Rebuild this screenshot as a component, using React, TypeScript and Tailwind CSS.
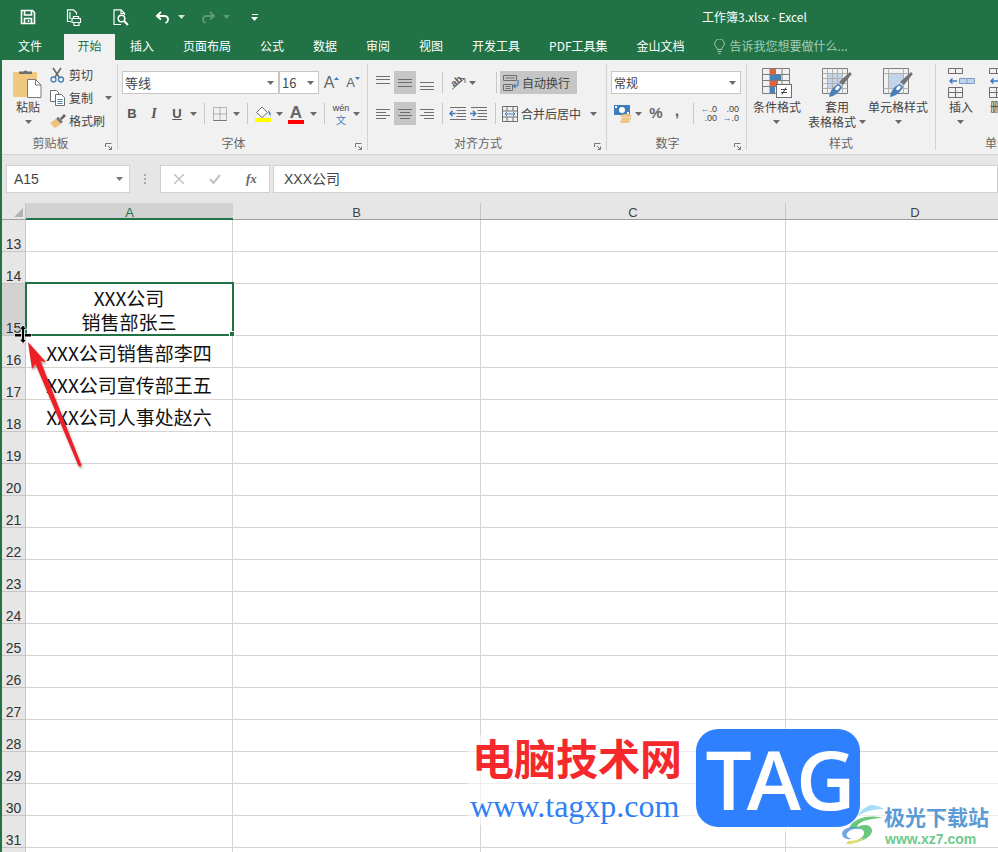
import type { ReactNode } from "react";

const tabs = ["插入", "页面布局", "公式", "数据", "审阅", "视图", "开发工具", "PDF工具集", "金山文档"];

const rows = [
  { n: 13, h: "h-[32px]" },
  { n: 14, h: "h-[32px]" },
  { n: 15, h: "h-[52px]", selected: true },
  { n: 16, h: "h-[32px]", text: "XXX公司销售部李四" },
  { n: 17, h: "h-[32px]", text: "XXX公司宣传部王五" },
  { n: 18, h: "h-[32px]", text: "XXX公司人事处赵六" },
  ...[19, 20, 21, 22, 23, 24, 25, 26, 27, 28, 29, 30, 31, 32].map((n) => ({ n, h: "h-[32px]" })),
] as { n: number; h: string; text?: string; selected?: boolean }[];

function Caret({ color = "#6a6a6a" }: { color?: string }) {
  return (
    <svg width="7" height="4" viewBox="0 0 7 4">
      <path d="M0 0h7L3.5 4z" fill={color} />
    </svg>
  );
}

function Launcher() {
  return (
    <svg width="7" height="7" viewBox="0 0 7 7" fill="none" stroke="#777">
      <path d="M.5 4V.5H6.5M3 3l3 3M6.5 3.5v3h-3" />
    </svg>
  );
}

function Sep() {
  return <div className="h-[21px] w-px shrink-0 self-center bg-[#c6c6c6]" />;
}

function Slot({ className = "", children }: { className?: string; children?: ReactNode }) {
  return <div className={`flex h-[23px] shrink-0 items-center justify-center ${className}`}>{children}</div>;
}

function Group({ className, label, launcher, children }: { className: string; label: string; launcher?: boolean; children: ReactNode }) {
  return (
    <div className={`flex h-[86px] shrink-0 flex-col border-r border-[#d2d2d2] ${className}`}>
      <div className="h-[72px]">{children}</div>
      <div className="flex h-[14px] text-[#666]">
        <span className="flex-1 text-center leading-[14px]">{label}</span>
        {launcher && (
          <span className="flex w-[18px] items-end justify-end pr-[5px]">
            <Launcher />
          </span>
        )}
      </div>
    </div>
  );
}

// alignment buttons: one svg, a line per entry of [x, width, y]
function Lines({ lines, w = 14, h = 14 }: { lines: number[][]; w?: number; h?: number }) {
  return (
    <svg width={w} height={h} viewBox={`0 0 ${w} ${h}`} stroke="#6e6e6e">
      {lines.map(([x, len, y], i) => (
        <path key={i} d={`M${x} ${y + 0.5}h${len}`} />
      ))}
    </svg>
  );
}

function SaveIcon() {
  return (
    <svg width="16" height="16" viewBox="0 0 16 16" fill="none" stroke="#fff" strokeWidth="1.6">
      <path d="M1.5 1.5h11l2 2v11h-13z" />
      <path d="M4.5 2v4h7V2M4.5 14.500v-5h7v5" />
      <path d="M8.500 11v2" />
    </svg>
  );
}

function PrintIcon() {
  return (
    <svg width="17" height="17" viewBox="0 0 17 17" fill="none" stroke="#fff" strokeWidth="1.2">
      <path d="M5 12.500H1.500V.8h6l3 3v2" />
      <path d="M4 3v7" />
      <path d="M7.500 7.500h5v2h-5zM6 9.500h8.500v4H6zM8 13.500h5v3H8z" fill="#217346" />
    </svg>
  );
}

function PreviewIcon() {
  return (
    <svg width="17" height="17" viewBox="0 0 17 17" fill="none" stroke="#fff" strokeWidth="1.2">
      <path d="M8 15.500H1V.8h7l3.500 3.500V6" />
      <path d="M8 1v3.500h3.500" />
      <circle cx="8.500" cy="9.500" r="3.300" strokeWidth="1.500" />
      <path d="M11 12l4 4" strokeWidth="2" />
    </svg>
  );
}

function UndoIcon({ color = "#fff" }: { color?: string }) {
  return (
    <svg width="15" height="13" viewBox="0 0 15 13" fill="none" stroke={color} strokeWidth="1.800">
      <path d="M6 1L1.800 5 6 8.500" />
      <path d="M2 5h7.500c4 0 5 5 1 7" />
    </svg>
  );
}

function PasteIcon() {
  return (
    <svg width="30" height="30" viewBox="0 0 30 30">
      <rect x="0" y="4" width="24" height="25" rx="1" fill="#f0c87f" />
      <path d="M6 6V3.500h4.500a2.500 2.500 0 0 1 4 0H19V6z" fill="#6e6e6e" />
      <path d="M14.500 11.500h8l5.500 5.500v12.500H14.500z" fill="#fff" stroke="#7a7a7a" />
      <path d="M22.500 11.500v5.500H28" fill="none" stroke="#7a7a7a" />
    </svg>
  );
}

function ScissorsIcon() {
  return (
    <svg width="15" height="16" viewBox="0 0 15 16" fill="none">
      <path d="M3 1l6 9M11 1L5 10" stroke="#6a6a6a" strokeWidth="1.600" />
      <circle cx="3.500" cy="12.500" r="2.500" stroke="#3f7dbd" strokeWidth="1.300" />
      <circle cx="11" cy="12.500" r="2.500" stroke="#3f7dbd" strokeWidth="1.300" />
    </svg>
  );
}

function CopyIcon() {
  return (
    <svg width="16" height="16" viewBox="0 0 16 16" fill="#fff" stroke="#6e6e6e">
      <path d="M.5.500h6l2 2v9H.5z" />
      <path d="M5.500 4.500h6l3 3v8h-9z" />
      <path d="M7.500 9.500h5M7.500 11.500h5M7.500 13.500h5" stroke="#4a7fb8" />
    </svg>
  );
}

function BrushIcon() {
  return (
    <svg width="16" height="14" viewBox="0 0 16 14">
      <path d="M10 4.500L14 0l2 2-4.500 4z" fill="#5f5f5f" />
      <path d="M8 2.800l5 5-2.500 2L6 5z" fill="#777" />
      <path d="M5.500 4.500l5 5.200C9 12 6 13 4.500 14 3 12 1 10 0 8.800 2 8 4 6.500 5.500 4.500z" fill="#eec27a" />
    </svg>
  );
}

function BorderIcon() {
  return (
    <svg width="14" height="14" viewBox="0 0 14 14" fill="none" stroke="#777" strokeDasharray="1 1">
      <path d="M.5.500h13v13H.5zM7 .500v13M.5 7h13" />
      <path d="M.5 13.500h13" strokeDasharray="none" />
    </svg>
  );
}

function FillIcon() {
  return (
    <svg width="17" height="16" viewBox="0 0 17 16">
      <path d="M7 1L1.500 6.500 7 11.500l5.500-5z" fill="#fff" stroke="#6e6e6e" />
      <path d="M13 4.500c2.500 1 3 3 2.500 5.500l-1.500-2z" fill="#3f7dbd" />
      <rect y="12" width="16" height="4" fill="#ffff00" />
    </svg>
  );
}

function FontColorIcon() {
  return (
    <span className="relative flex h-[20px] w-[16px] flex-col items-center">
      <span className="text-[17px] font-bold leading-[17px] text-[#666] [font-family:'Liberation_Sans',sans-serif]">A</span>
      <span className="absolute bottom-0 h-[4px] w-[16px] bg-[#ff0000]" />
    </span>
  );
}

function CurrencyIcon() {
  return (
    <svg width="18" height="18" viewBox="0 0 18 18">
      <rect x="0" y="0" width="16" height="10" fill="#3f7dbd" />
      <circle cx="8" cy="5" r="3" fill="#fff" />
      <path d="M1 1h2v2H1zM13 7h2v2h-2z" fill="#fff" />
      <ellipse cx="12" cy="11" rx="5.500" ry="2" fill="#efc583" />
      <ellipse cx="12" cy="14" rx="5.500" ry="2" fill="#efc583" stroke="#f8f8f8" strokeWidth=".5" />
      <ellipse cx="11" cy="16.500" rx="5" ry="1.500" fill="#efc583" />
    </svg>
  );
}

function WrapIcon() {
  return (
    <svg width="16" height="16" viewBox="0 0 16 16" fill="none">
      <path d="M.5.500h13v5H.5zM.5 9.500h9v6h-9z" stroke="#6e6e6e" />
      <path d="M2.500 3h9M2.500 11.500h5M2.500 13.500h5" stroke="#6e6e6e" />
      <path d="M15 5v4c0 1.500-1 2-2 2h-2M12.500 9l-2 2 2 2" stroke="#3f7dbd" strokeWidth="1.200" />
    </svg>
  );
}

function MergeIcon() {
  return (
    <svg width="16" height="16" viewBox="0 0 16 16" fill="none">
      <path d="M.5.500h15v15H.5zM.5 5h15M.5 11h15M5 .500V5M11 .500V5M5 11v4.500M11 11v4.500" stroke="#6e6e6e" />
      <path d="M3 8h10M5 6l-2 2 2 2M11 6l2 2-2 2" stroke="#3f7dbd" />
    </svg>
  );
}

function IndentIcon({ inc }: { inc?: boolean }) {
  return (
    <svg width="17" height="13" viewBox="0 0 17 13" fill="none">
      <path d="M1 .500h16M7.500 3.500H17M7.500 6.500H17M7.500 9.500H17M1 12.500h16" stroke="#6e6e6e" />
      {inc ? (
        <path d="M0 6.500h5M3 3.800l2.500 2.700L3 9.200" stroke="#3f7dbd" strokeWidth="1.600" />
      ) : (
        <path d="M1 6.500h5.500M3.500 3.800L1 6.500l2.500 2.700" stroke="#3f7dbd" strokeWidth="1.600" />
      )}
    </svg>
  );
}

function OrientIcon() {
  return (
    <svg width="16" height="15" viewBox="0 0 16 15" fill="none">
      <text x="1" y="10" fontSize="10" fontWeight="bold" fill="#555" transform="rotate(-40 6 7)" fontFamily="Liberation Sans">ab</text>
      <path d="M2 14.500L14 4M10.500 3.500H15V8" stroke="#6e6e6e" />
    </svg>
  );
}

function CondIcon() {
  return (
    <svg width="30" height="30" viewBox="0 0 30 30" fill="none">
      <path d="M.5.500h27v25H.5zM.5 6.500h27M.5 12.500h27M.5 18.500h27M8 .500v25M20 .500v25" stroke="#7c7c7c" />
      <rect x="8" y="1" width="6" height="5" fill="#dd6440" />
      <rect x="8" y="7" width="11" height="5" fill="#4a7fb8" />
      <rect x="8" y="13" width="8" height="5" fill="#dd6440" />
      <rect x="8" y="19" width="5" height="6" fill="#4a7fb8" />
      <rect x="14.500" y="16.500" width="15" height="13" fill="#fff" stroke="#6e6e6e" />
      <path d="M19 21.500h6M19 24.500h6M24 19.500l-4 7" stroke="#444" />
    </svg>
  );
}

function TableStyleIcon({ cell }: { cell?: boolean }) {
  return (
    <svg width="30" height="30" viewBox="0 0 30 30" fill="none">
      <path d="M.5.500h25v25H.5z" stroke="#7c7c7c" />
      {cell ? (
        <>
          <path d="M.5 5.500h25M.5 20.500h25M5.500.500v25M20.500.500v25" stroke="#b0b0b0" />
          <rect x="6" y="6" width="14" height="14" fill="#c3d4ea" />
        </>
      ) : (
        <>
          <rect x="6" y="6" width="14" height="14" fill="#c3d4ea" />
          <path d="M.5 5.500h25M.5 10.500h25M.5 15.500h25M.5 20.500h25M5.500.500v25M10.500.500v25M15.500.500v25M20.500.500v25" stroke="#b0b0b0" />
        </>
      )}
      <path d="M17 14L28 4l1.800 2L21 17z" fill="#737373" />
      <path d="M7 29c1-6 4-11 10-13l3 3c-2 5-7 9-13 10z" fill="#4a7fb8" />
      <ellipse cx="15.500" cy="20" rx="2.600" ry="1.500" fill="#fff" transform="rotate(-40 15.500 20)" />
    </svg>
  );
}

function InsertIcon() {
  return (
    <svg width="27" height="30" viewBox="0 0 27 30" fill="none" stroke="#6e6e6e">
      <path d="M.5.500h14v5H.5zM7.500.500v5" />
      <path d="M.5 19.500h14v10H.5zM7.500 19.500v10M.5 24.500h14" />
      <path d="M11.500 10.500h15v5h-15zM19 10.500v5" fill="#c3d4ea" stroke="#7d9cc4" />
      <path d="M9 13H2M4.500 10.500L2 13l2.500 2.500" stroke="#3f7dbd" strokeWidth="1.500" />
    </svg>
  );
}

function LargeButton({ className, icon, children }: { className: string; icon: ReactNode; children: ReactNode }) {
  return (
    <div className={`flex shrink-0 flex-col items-center pt-[4px] ${className}`}>
      <div className="flex h-[30px] items-center">{icon}</div>
      <div className="mt-[1px] flex flex-col items-center leading-[15px]">{children}</div>
    </div>
  );
}

function Select({ className, text, size = "text-[12px]" }: { className: string; text: string; size?: string }) {
  return (
    <div className={`flex h-[23px] shrink-0 items-center justify-between border border-[#c6c6c6] bg-white pl-[2px] pr-[4px] ${size} ${className}`}>
      <span>{text}</span>
      <Caret />
    </div>
  );
}

function SwirlLogo() {
  return (
    <svg width="44" height="42" viewBox="0 0 44 42" fill="none">
      <path d="M30 1C24 3 19 7 17 12c6-4 14-7 26-7-5-3-9-4-13-4z" fill="#a9dcf5" />
      <path d="M8 24c4-10 20-14 34-10-8 0-24 2-26 9 6-3 14-3 15 3 1 7-12 13-26 14 10-3 19-6 18-12-1-5-9-3-15-4z" fill="#6cc77e" />
      <path d="M2 27c-3 5 2 9 9 8-5-1-7-4-4-7 4-4 11-4 14-2-4-4-15-4-19 1z" fill="#4d8fd8" opacity=".8" />
      <path d="M5 40c6 0 14-2 19-6-5 1-11 3-17 3z" fill="#e6dc6c" />
    </svg>
  );
}

export default function App() {
  return (
    <div className="relative h-[852px] w-[998px] overflow-hidden border-l-2 border-[#217346] bg-white text-[12px] text-[#444] [font-family:'Noto_Sans_CJK_SC','Liberation_Sans',sans-serif]">
      {/* title bar */}
      <div className="-ml-[2px] flex h-[34px] items-center bg-[#217346] text-white">
        <div className="ml-[20px] w-[16px]"><SaveIcon /></div>
        <div className="ml-[30px] w-[17px]"><PrintIcon /></div>
        <div className="ml-[30px] w-[17px]"><PreviewIcon /></div>
        <div className="ml-[25px] w-[15px]"><UndoIcon /></div>
        <div className="ml-[8px]"><Caret color="#d5e5dc" /></div>
        <div className="ml-[16px] -scale-x-100"><UndoIcon color="#5c9a7b" /></div>
        <div className="ml-[7px]"><Caret color="#5c9a7b" /></div>
        <div className="ml-[21px] flex flex-col items-center gap-[2px]">
          <div className="h-px w-[6px] bg-white" />
          <Caret color="#fff" />
        </div>
        <div className="ml-[444px] leading-[16px]">工作簿3.xlsx - Excel</div>
      </div>

      {/* tabs */}
      <div className="-ml-[2px] flex h-[26px] items-center bg-[#217346] text-white">
        <div className="ml-[18px] w-[46px] pb-[2px]">文件</div>
        <div className="flex h-[26px] w-[51px] items-center justify-center bg-[#f1f1f1] pb-[2px] text-[#217346]">开始</div>
        <div className="ml-[2px] flex items-center gap-[3px] pb-[2px]">
          {tabs.map((t) => (
            <div key={t} className="px-[13px]">{t}</div>
          ))}
        </div>
        <div className="ml-[16px] flex items-center gap-[5px] pb-[2px] text-[#a5ccb6]">
          <svg width="11" height="15" viewBox="0 0 11 15" fill="none" stroke="#a5ccb6">
            <path d="M3.500 10.500C3 8 .7 7.500.7 4.700a4.800 4.800 0 0 1 9.600 0c0 2.800-2.300 3.300-2.800 5.800zM3.500 12.500h4M4.500 14.500h2" />
          </svg>
          告诉我您想要做什么...
        </div>
      </div>

      {/* ribbon */}
      <div className="flex h-[95px] items-start overflow-hidden border-b border-[#d4d4d4] bg-[#f1f1f1] pt-[4px]">
        <Group className="w-[116px]" label="剪贴板" launcher>
          <div className="flex">
            <div className="ml-[9px] flex w-[34px] flex-col items-center pt-[4px]">
              <PasteIcon />
              <div className="mt-[1px] leading-[15px]">粘贴</div>
              <div className="mt-[6px]"><Caret /></div>
            </div>
            <div className="ml-[5px] -mt-px flex flex-col">
              <div className="flex h-[23px] items-center gap-[3px]"><div className="w-[16px]"><ScissorsIcon /></div>剪切</div>
              <div className="flex h-[23px] items-center gap-[3px]"><div className="w-[16px]"><CopyIcon /></div>复制<div className="ml-[9px]"><Caret /></div></div>
              <div className="flex h-[23px] items-center gap-[3px]"><div className="w-[16px]"><BrushIcon /></div>格式刷</div>
            </div>
          </div>
        </Group>

        <Group className="w-[250px]" label="字体" launcher>
          <div className="flex flex-col gap-[8px] pl-[4px] pt-[7px]">
            <div className="flex">
              <Select className="w-[157px]" text="等线" size="text-[13px]" />
              <Select className="w-[40px]" text="16" size="text-[13px]" />
              <Slot className="ml-[3px] w-[19px]">
                <span className="text-[16px] leading-none text-[#666] [font-family:'Liberation_Sans',sans-serif]">A</span>
                <svg width="5" height="3" viewBox="0 0 5 3" className="mb-[9px]"><path d="M0 3h5L2.500 0z" fill="#3f7dbd" /></svg>
              </Slot>
              <Slot className="ml-[2px] w-[20px]">
                <span className="text-[13px] leading-none text-[#666] [font-family:'Liberation_Sans',sans-serif]">A</span>
                <svg width="5" height="3" viewBox="0 0 5 3" className="mb-[9px]"><path d="M0 0h5L2.500 3z" fill="#3f7dbd" /></svg>
              </Slot>
            </div>
            <div className="flex">
              <Slot className="w-[20px] text-[13px] font-bold text-[#555] [font-family:'Liberation_Sans',sans-serif]">B</Slot>
              <Slot className="w-[24px] font-['Liberation_Serif'] text-[14px] font-bold italic text-[#555]">I</Slot>
              <Slot className="w-[22px] text-[13px] font-bold text-[#555] underline [font-family:'Liberation_Sans',sans-serif]">U</Slot>
              <Slot className="w-[10px]"><Caret /></Slot>
              <div className="ml-[6px] flex"><Sep /></div>
              <Slot className="ml-[6px] w-[18px]"><BorderIcon /></Slot>
              <Slot className="ml-[2px] w-[10px]"><Caret /></Slot>
              <div className="ml-[6px] flex"><Sep /></div>
              <Slot className="ml-[6px] w-[18px]"><FillIcon /></Slot>
              <Slot className="ml-[2px] w-[10px]"><Caret /></Slot>
              <Slot className="ml-[3px] w-[18px]"><FontColorIcon /></Slot>
              <Slot className="ml-[3px] w-[10px]"><Caret /></Slot>
              <div className="ml-[6px] flex"><Sep /></div>
              <Slot className="ml-[7px] w-[18px] flex-col text-[9px] leading-[11px]">
                <span className="[font-family:'Liberation_Sans',sans-serif]">wén</span>
                <span className="text-[10px] text-[#3f7dbd]">文</span>
              </Slot>
              <Slot className="ml-[1px] w-[10px]"><Caret /></Slot>
            </div>
          </div>
        </Group>

        <Group className="w-[239px]" label="对齐方式" launcher>
          <div className="flex flex-col gap-[8px] pl-[4px] pt-[7px]">
            <div className="flex">
              <Slot className="w-[22px]"><Lines lines={[[0, 14, 0], [0, 14, 3], [0, 14, 7]]} /></Slot>
              <Slot className="w-[22px] bg-[#c6c6c6]"><Lines lines={[[0, 14, 3], [0, 14, 6], [0, 14, 10]]} /></Slot>
              <Slot className="w-[22px]"><div className="mt-[6px]"><Lines lines={[[0, 14, 3], [0, 14, 7], [0, 14, 10]]} /></div></Slot>
              <div className="ml-[4px] flex"><Sep /></div>
              <Slot className="ml-[7px] w-[16px]"><OrientIcon /></Slot>
              <Slot className="ml-[1px] w-[10px]"><Caret /></Slot>
              <div className="ml-[19px] flex"><Sep /></div>
              <div className="ml-[3px] flex h-[23px] w-[77px] items-center bg-[#c6c6c6] pl-[3px]">
                <WrapIcon />
                <span className="ml-[3px]">自动换行</span>
              </div>
            </div>
            <div className="flex">
              <Slot className="w-[22px]"><Lines lines={[[0, 14, 2], [0, 10, 5], [0, 14, 8], [0, 10, 11]]} /></Slot>
              <Slot className="w-[22px] bg-[#c6c6c6]"><Lines lines={[[0, 14, 2], [2, 10, 5], [0, 14, 8], [2, 10, 11]]} /></Slot>
              <Slot className="w-[22px]"><Lines lines={[[0, 14, 2], [4, 10, 5], [0, 14, 8], [4, 10, 11]]} /></Slot>
              <div className="ml-[4px] flex"><Sep /></div>
              <Slot className="ml-[6px] w-[17px]"><IndentIcon /></Slot>
              <Slot className="ml-[4px] w-[17px]"><IndentIcon inc /></Slot>
              <div className="ml-[8px] flex"><Sep /></div>
              <Slot className="ml-[6px] w-[16px]"><MergeIcon /></Slot>
              <span className="ml-[3px] flex w-[60px] items-center">合并后居中</span>
              <Slot className="ml-[7px] w-[10px]"><Caret /></Slot>
            </div>
          </div>
        </Group>

        <Group className="w-[140px]" label="数字" launcher>
          <div className="flex flex-col gap-[8px] pl-[4px] pt-[7px]">
            <Select className="w-[130px]" text="常规" />
            <div className="flex">
              <Slot className="ml-[3px] w-[18px]"><CurrencyIcon /></Slot>
              <Slot className="ml-[1px] w-[10px]"><Caret /></Slot>
              <Slot className="ml-[5px] w-[16px] text-[15px] font-bold text-[#666] [font-family:'Liberation_Sans',sans-serif]">%</Slot>
              <Slot className="ml-[5px] w-[16px] pb-[6px] text-[16px] font-bold text-[#666] [font-family:'Liberation_Sans',sans-serif]">,</Slot>
              <div className="ml-[8px] flex"><Sep /></div>
              <Slot className="ml-[9px] w-[14px] flex-col items-end text-[9px] leading-[9px] [font-family:'Liberation_Sans',sans-serif]">
                <span><span className="text-[#3f7dbd]">←</span>.0</span>
                <span>.00</span>
              </Slot>
              <Slot className="ml-[8px] w-[14px] flex-col items-end text-[9px] leading-[9px] [font-family:'Liberation_Sans',sans-serif]">
                <span>.00</span>
                <span><span className="text-[#3f7dbd]">→</span>.0</span>
              </Slot>
            </div>
          </div>
        </Group>

        <Group className="w-[189px]" label="样式">
          <div className="flex">
            <LargeButton className="w-[60px]" icon={<CondIcon />}>
              <span>条件格式</span>
              <span className="flex h-[15px] items-center"><Caret /></span>
            </LargeButton>
            <LargeButton className="w-[60px]" icon={<TableStyleIcon />}>
              <span>套用</span>
              <span className="flex items-center">表格格式<span className="ml-[3px]"><Caret /></span></span>
            </LargeButton>
            <LargeButton className="ml-px w-[60px]" icon={<TableStyleIcon cell />}>
              <span>单元格样式</span>
              <span className="flex h-[15px] items-center"><Caret /></span>
            </LargeButton>
          </div>
        </Group>

        <Group className="w-[134px] border-r-0" label="单元格">
          <div className="flex">
            <LargeButton className="w-[50px]" icon={<InsertIcon />}>
              <span>插入</span>
              <span className="flex h-[15px] items-center"><Caret /></span>
            </LargeButton>
            <LargeButton className="w-[32px]" icon={<InsertIcon />}>
              <span>删除</span>
              <span className="flex h-[15px] items-center"><Caret /></span>
            </LargeButton>
          </div>
        </Group>
      </div>

      {/* formula bar */}
      <div className="flex h-[48px] items-start bg-[#e6e6e6] pl-[4px] pt-[10px]">
        <div className="flex h-[28px] w-[124px] items-center justify-between border border-[#d0d0d0] bg-white pl-[7px] pr-[6px] text-[14px] [font-family:'Liberation_Sans',sans-serif]">
          A15
          <Caret color="#777" />
        </div>
        <div className="ml-[13px] flex h-[28px] w-[3px] flex-col items-center justify-center gap-[2px]">
          <span className="size-[2px] bg-[#aaa]" />
          <span className="size-[2px] bg-[#aaa]" />
          <span className="size-[2px] bg-[#aaa]" />
        </div>
        <div className="ml-[14px] flex h-[28px] w-[110px] items-center border border-[#d0d0d0] bg-white">
          <svg width="10" height="10" viewBox="0 0 10 10" className="ml-[13px]" stroke="#c2c2c2" strokeWidth="1.500"><path d="M0 0l10 10M10 0L0 10" /></svg>
          <svg width="12" height="10" viewBox="0 0 12 10" className="ml-[25px]" fill="none" stroke="#c2c2c2" strokeWidth="2"><path d="M1 5l3.500 4L11 1" /></svg>
          <span className="ml-[25px] font-['Liberation_Serif'] text-[13px] font-bold italic text-[#666]">fx</span>
        </div>
        <div className="ml-[3px] flex h-[28px] flex-1 items-center border border-[#d0d0d0] bg-white pl-[10px] text-[14px] [font-family:'Liberation_Sans','Noto_Sans_CJK_SC',sans-serif]">
          XXX公司
        </div>
      </div>

      {/* column headers */}
      <div className="flex h-[17px] border-b border-[#9f9f9f] bg-[#e6e6e6] text-[13px] leading-[16px] [font-family:'Liberation_Sans',sans-serif]">
        <div className="flex w-[24px] shrink-0 items-end justify-end border-r border-[#c6c6c6] pb-[2px] pr-[2px]">
          <svg width="9" height="9" viewBox="0 0 9 9"><path d="M9 0v9H0z" fill="#b4b4b4" /></svg>
        </div>
        <div className="-mb-px w-[207px] shrink-0 border-b-2 border-[#217346] bg-[#d2d2d2] pt-[2px] text-center text-[#217346]">A</div>
        <div className="w-[248px] shrink-0 border-r border-[#c6c6c6] pt-[2px] text-center">B</div>
        <div className="w-[305px] shrink-0 border-r border-[#c6c6c6] pt-[2px] text-center">C</div>
        <div className="w-[258px] shrink-0 pt-[2px] text-center">D</div>
      </div>

      {/* sheet */}
      {rows.map((r) => (
        <div key={r.n} className={`flex ${r.h}`}>
          <div className={`flex w-[24px] items-end justify-center border-b border-r border-[#c6c6c6] text-[14px] leading-[14px] text-[#333] [font-family:'Liberation_Sans',sans-serif] ${r.selected ? "bg-[#d2d2d2]" : "bg-[#e6e6e6]"}`}>
            {r.n}
          </div>
          <div className="relative flex w-[207px] items-end justify-center border-b border-r border-[#d4d4d4] text-[19px] leading-[24px] text-[#111]">
            {r.text && <span className="whitespace-nowrap pb-[2px]">{r.text}</span>}
            {r.selected && (
              <>
                <span className="pb-[1px] text-center">XXX公司<br />销售部张三</span>
                <div className="absolute -left-[1px] -top-[2px] h-[54px] w-[209px] border-2 border-[#217346]" />
                <div className="absolute -bottom-[2px] -right-[3px] size-[6px] border border-white bg-[#217346]" />
              </>
            )}
          </div>
          <div className="w-[248px] border-b border-r border-[#d4d4d4]" />
          <div className="w-[305px] border-b border-r border-[#d4d4d4]" />
          <div className="flex-1 border-b border-[#d4d4d4]" />
        </div>
      ))}

      {/* red annotation arrow */}
      <svg className="absolute left-[22px] top-[338px] drop-shadow-[1px_2px_1px_rgba(0,0,0,0.35)]" width="64" height="132" viewBox="22 338 64 132">
        <path d="M26 342L44 362 38.500 361 79.500 465Q79 467 76.500 466L33.500 364 30 369z" fill="#ee1f26" />
      </svg>

      {/* resize cursor over the row 15 border */}
      <svg className="absolute left-[11px] top-[323px]" width="20" height="22" viewBox="11 323 20 22">
        <path d="M13 334h16v2.500H13z" fill="#000" stroke="#fff" strokeWidth=".8" paintOrder="stroke" />
        <path d="M21 325l3.800 4.500H22.500v10h2.300L21 343.500l-3.800-4.200H19.500v-10h-2.300z" fill="#000" stroke="#fff" strokeWidth=".8" />
      </svg>

      {/* site watermark */}
      <div className="absolute left-[466px] top-[735px] h-[90px] w-[230px] bg-white/60" />
      <div className="absolute left-[696px] top-[762px] h-[70px] w-[302px] bg-white/60" />
      <div className="absolute left-[470px] top-[733px] text-[42px] font-bold leading-[48px] text-[#f5282b]">电脑技术网</div>
      <div className="absolute left-[468px] top-[788px] font-['Liberation_Serif'] text-[32px] leading-[36px] text-[#2f7ef5]">www.tagxp.com</div>
      <div className="absolute left-[694px] top-[729px] flex h-[98px] w-[164px] items-center justify-center rounded-[22px] bg-[#2f80ff] font-['Open_Sans'] text-[82px] font-semibold leading-none tracking-[-5px] text-white">TAG</div>
      <div className="absolute left-[839px] top-[804px]"><SwirlLogo /></div>
      <div className="absolute left-[882px] top-[802px] text-[21px] font-bold leading-[28px] text-[#5b9bd5]">极光下载站</div>
      <div className="absolute left-[883px] top-[830px] text-[14px] font-semibold leading-[18px] text-[#6fca8c] [font-family:'Liberation_Sans',sans-serif]">www.xz7.com</div>
    </div>
  );
}
